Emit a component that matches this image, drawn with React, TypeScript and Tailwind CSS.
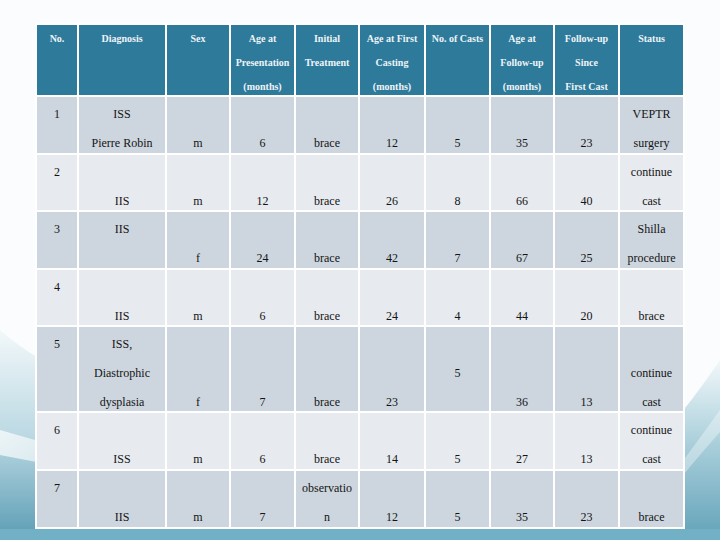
import React from "react";

const headers = [
  ["No."],
  ["Diagnosis"],
  ["Sex"],
  ["Age at", "Presentation", "(months)"],
  ["Initial", "Treatment"],
  ["Age at First", "Casting", "(months)"],
  ["No. of Casts"],
  ["Age at", "Follow-up", "(months)"],
  ["Follow-up", "Since", "First Cast"],
  ["Status"],
];

// each cell lists its text per line slot, "" keeps the slot empty
const rows: string[][][] = [
  [["1", ""], ["ISS", "Pierre Robin"], ["", "m"], ["", "6"], ["", "brace"], ["", "12"], ["", "5"], ["", "35"], ["", "23"], ["VEPTR", "surgery"]],
  [["2", ""], ["", "IIS"], ["", "m"], ["", "12"], ["", "brace"], ["", "26"], ["", "8"], ["", "66"], ["", "40"], ["continue", "cast"]],
  [["3", ""], ["IIS", ""], ["", "f"], ["", "24"], ["", "brace"], ["", "42"], ["", "7"], ["", "67"], ["", "25"], ["Shilla", "procedure"]],
  [["4", ""], ["", "IIS"], ["", "m"], ["", "6"], ["", "brace"], ["", "24"], ["", "4"], ["", "44"], ["", "20"], ["", "brace"]],
  [["5", "", ""], ["ISS,", "Diastrophic", "dysplasia"], ["", "", "f"], ["", "", "7"], ["", "", "brace"], ["", "", "23"], ["", "5", ""], ["", "", "36"], ["", "", "13"], ["", "continue", "cast"]],
  [["6", ""], ["", "ISS"], ["", "m"], ["", "6"], ["", "brace"], ["", "14"], ["", "5"], ["", "27"], ["", "13"], ["continue", "cast"]],
  [["7", ""], ["", "IIS"], ["", "m"], ["", "7"], ["observatio", "n"], ["", "12"], ["", "5"], ["", "35"], ["", "23"], ["", "brace"]],
];

function Backdrop() {
  return (
    <svg className="absolute inset-0" width="720" height="540" viewBox="0 0 720 540">
      <defs>
        <linearGradient id="left" x1="0" y1="0" x2="0" y2="1">
          <stop offset="0" stopColor="#f2f8fa" />
          <stop offset="0.5" stopColor="#bcd9e3" />
          <stop offset="1" stopColor="#5a9cb4" />
        </linearGradient>
        <linearGradient id="right" x1="0" y1="0" x2="0" y2="1">
          <stop offset="0" stopColor="#f2f8fa" />
          <stop offset="0.45" stopColor="#acd0dc" />
          <stop offset="1" stopColor="#62a2b8" />
        </linearGradient>
        <linearGradient id="shine" x1="0" y1="0" x2="1" y2="0">
          <stop offset="0" stopColor="#ffffff" stopOpacity="0.7" />
          <stop offset="1" stopColor="#ffffff" stopOpacity="0" />
        </linearGradient>
      </defs>
      <path d="M0 330 Q 140 455 720 515 L720 540 L0 540 Z" fill="url(#left)" />
      <path d="M0 430 Q 120 465 300 505 L300 512 Q 120 478 0 455 Z" fill="url(#shine)" />
      <path d="M720 360 Q 660 450 560 540 L720 540 Z" fill="url(#right)" />
      <path d="M720 410 Q 695 445 665 485 L675 485 Q 702 452 720 432 Z" fill="#ffffff" opacity="0.35" />
      <rect x="0" y="529" width="720" height="11" fill="#72b1c5" />
    </svg>
  );
}

export default function App() {
  return (
    <div className="relative w-[720px] h-[540px] overflow-hidden bg-[#fafcfd] font-['Liberation_Serif','Times_New_Roman',serif]">
      <Backdrop />
      <div className="relative pt-[23px] pl-[35px]">
        <div className="inline-grid grid-cols-[40px_86px_62px_63px_62px_64px_63px_62px_63px_63px] grid-rows-[70px_56px_55px_56px_55px_84px_56px_56px] gap-[2px] p-[2px] bg-white">
          {headers.map((lines, i) => (
            <div key={i} className="flex flex-col bg-[#2e7a9b] pt-[2px] text-center text-[10px] font-bold text-[#eef4f7] whitespace-nowrap">
              {lines.map((l, j) => (
                <div key={j} className="h-[24px] leading-[24px]">
                  {l}
                </div>
              ))}
            </div>
          ))}
          {rows.map((cells, r) =>
            cells.map((slots, c) => (
              <div
                key={r + "-" + c}
                className={
                  "flex flex-col pt-[3px] text-center text-[12px] text-[#141414] whitespace-nowrap " +
                  (r % 2 === 0 ? "bg-[#cdd6de]" : "bg-[#e7eaee]")
                }
              >
                {slots.map((s, j) => (
                  <div key={j} className="h-[29px] leading-[29px]">
                    {s || "\u00a0"}
                  </div>
                ))}
              </div>
            ))
          )}
        </div>
      </div>
    </div>
  );
}
